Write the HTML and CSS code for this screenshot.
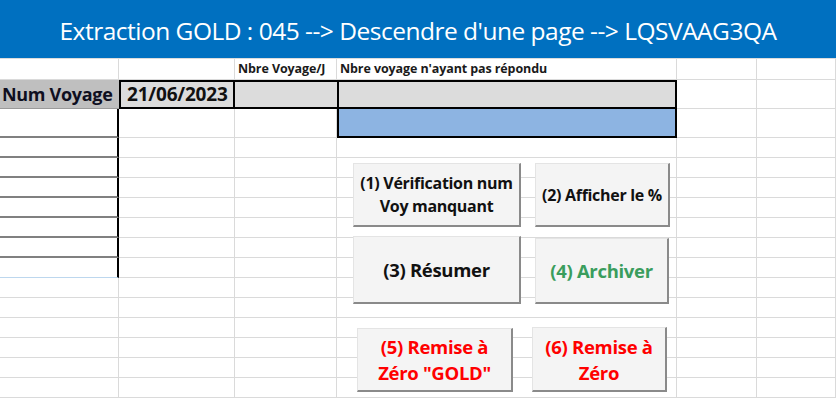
FILE: index.html
```html
<!DOCTYPE html>
<html lang="fr">
<head>
<meta charset="utf-8">
<title>Extraction GOLD</title>
<link rel="stylesheet" href="styles.css">
</head>
<body>
<div class="sheet">
  <header class="banner">Extraction GOLD : 045 --&gt; Descendre d'une page --&gt; LQSVAAG3QA</header>
  <div class="grid">
    <!-- row 1 -->
    <div class="c"></div><div class="c"></div>
    <div class="c lbl">Nbre Voyage/J</div>
    <div class="c lbl">Nbre voyage n'ayant pas répondu</div>
    <div class="c"></div><div class="c"></div>
    <!-- row 2 -->
    <div class="c a-head">Num Voyage</div>
    <div class="c date">21/06/2023</div>
    <div class="c gray-mid"></div>
    <div class="c gray-box"></div>
    <div class="c"></div><div class="c"></div>
    <!-- row 3 -->
    <div class="c a-list"></div><div class="c"></div><div class="c"></div>
    <div class="c blue-box"></div>
    <div class="c"></div><div class="c"></div>
    <!-- rows 4-10 -->
    <div class="c a-list"></div><div class="c"></div><div class="c"></div><div class="c"></div><div class="c"></div><div class="c"></div>
    <div class="c a-list"></div><div class="c"></div><div class="c"></div><div class="c"></div><div class="c"></div><div class="c"></div>
    <div class="c a-list"></div><div class="c"></div><div class="c"></div><div class="c"></div><div class="c"></div><div class="c"></div>
    <div class="c a-list"></div><div class="c"></div><div class="c"></div><div class="c"></div><div class="c"></div><div class="c"></div>
    <div class="c a-list"></div><div class="c"></div><div class="c"></div><div class="c"></div><div class="c"></div><div class="c"></div>
    <div class="c a-list"></div><div class="c"></div><div class="c"></div><div class="c"></div><div class="c"></div><div class="c"></div>
    <div class="c a-last"></div><div class="c"></div><div class="c"></div><div class="c"></div><div class="c"></div><div class="c"></div>
    <!-- rows 11-16 -->
    <div class="c"></div><div class="c"></div><div class="c"></div><div class="c"></div><div class="c"></div><div class="c"></div>
    <div class="c"></div><div class="c"></div><div class="c"></div><div class="c"></div><div class="c"></div><div class="c"></div>
    <div class="c"></div><div class="c"></div><div class="c"></div><div class="c"></div><div class="c"></div><div class="c"></div>
    <div class="c"></div><div class="c"></div><div class="c"></div><div class="c"></div><div class="c"></div><div class="c"></div>
    <div class="c"></div><div class="c"></div><div class="c"></div><div class="c"></div><div class="c"></div><div class="c"></div>
    <div class="c"></div><div class="c"></div><div class="c"></div><div class="c"></div><div class="c"></div><div class="c"></div>
  </div>

  <div class="btn b1 small">(1) Vérification num<br>Voy manquant</div>
  <div class="btn b2 small">(2) Afficher le %</div>
  <div class="btn b3">(3) Résumer</div>
  <div class="btn b4 green">(4) Archiver</div>
  <div class="btn b5 red two">(5) Remise à<br>Zéro "GOLD"</div>
  <div class="btn b6 red two">(6) Remise à<br>Zéro</div>
</div>
</body>
</html>
```

FILE: styles.css
```css
* { box-sizing: border-box; }
html, body { margin: 0; padding: 0; background: #fff; overflow: hidden; }
body { font-family: "Open Sans", "Noto Sans", "DejaVu Sans", sans-serif; }

.sheet {
  position: relative;
  width: 836px;
  height: 407px;
  overflow: hidden;
}

.banner {
  height: 58px;
  background: #0070c0;
  color: #fff;
  font-size: 24.5px;
  letter-spacing: -0.5px;
  display: flex;
  align-items: center;
  justify-content: center;
  padding-top: 2px;
  white-space: nowrap;
}

.grid {
  display: grid;
  grid-template-columns: 119px 116px 102px 340px 80px 79px;
  grid-template-rows: 21px 29px 29px repeat(13, 20px);
  border-top: 1px solid #dcdcdc;
}

.c {
  border-right: 1px solid #dadada;
  border-bottom: 1px solid #dadada;
  min-width: 0;
  overflow: hidden;
  white-space: nowrap;
}

.lbl {
  font-weight: 700;
  font-size: 12.5px;
  letter-spacing: -0.1px;
  color: #1a1a1a;
  padding: 1px 0 0 3px;
  line-height: 18px;
}

.a-head {
  background: #bfbfbf;
  font-weight: 700;
  font-size: 18px;
  letter-spacing: -0.3px;
  color: #0f0f1f;
  padding: 0 0 0 2px;
  line-height: 28px;
  border-bottom: 1px solid #9a9a9a;
  border-right: 0;
}

.date {
  background: #dcdcdc;
  border: 2px solid #000;
  font-weight: 700;
  font-size: 19px;
  letter-spacing: -0.2px;
  color: #111;
  padding: 0 0 0 6px;
  line-height: 25px;
}

.gray-mid {
  background: #dcdcdc;
  border-top: 2px solid #000;
  border-bottom: 2px solid #000;
  border-right: 0;
}

.gray-box {
  background: #dcdcdc;
  border: 2px solid #000;
}

.blue-box {
  background: #8db4e2;
  border: 2px solid #000;
  border-top: 0;
}

.a-list {
  border-right: 2px solid #000;
  border-bottom: 2px solid #808080;
}

.a-last {
  border-right: 2px solid #000;
  border-bottom: 1px solid #bdd7ee;
}

.btn {
  position: absolute;
  display: flex;
  align-items: center;
  justify-content: center;
  text-align: center;
  background: #f4f4f4;
  border-top: 1px solid #e4e4e4;
  border-left: 1px solid #e4e4e4;
  border-right: 2px solid #8a8a8a;
  border-bottom: 2px solid #8a8a8a;
  font-weight: 700;
  font-size: 18.5px;
  letter-spacing: -0.3px;
  line-height: 26px;
  color: #111;
  padding-top: 1px;
  white-space: nowrap;
}

.btn.small { font-size: 16px; line-height: 23px; }
.btn.two { font-size: 18.5px; line-height: 26px; }

.b1 { left: 353px; top: 163px; width: 168px; height: 64px; }
.b2 { left: 535px; top: 163px; width: 135px; height: 64px; }
.b3 { left: 353px; top: 236px; width: 168px; height: 68px; }
.b4 { left: 535px; top: 238px; width: 134px; height: 66px; }
.b5 { left: 357px; top: 328px; width: 156px; height: 64px; }
.b6 { left: 532px; top: 327px; width: 135px; height: 65px; }

.green { color: #3a9d5d; }
.red { color: #ff0000; }
```
